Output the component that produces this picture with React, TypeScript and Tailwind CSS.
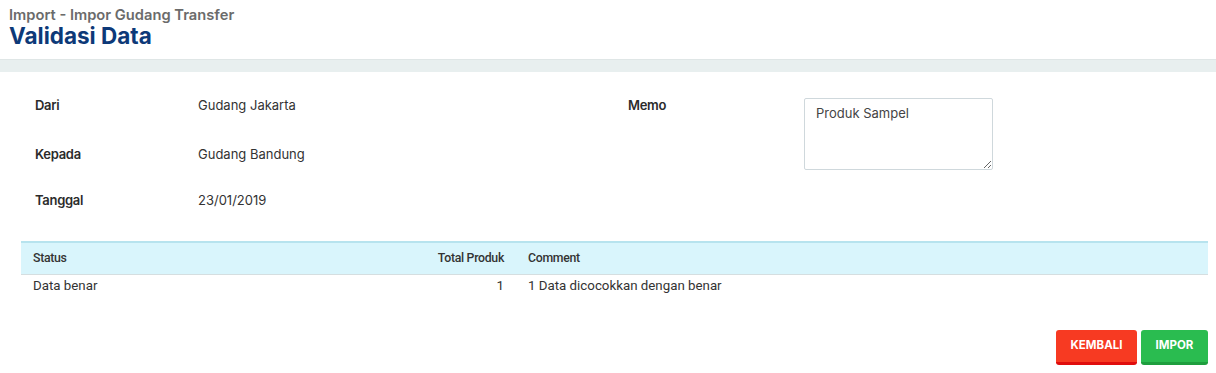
import React from 'react'

const FIELDS = [
  { label: 'Dari', value: 'Gudang Jakarta', gap: 'mt-0' },
  { label: 'Kepada', value: 'Gudang Bandung', gap: 'mt-[33px]' },
  { label: 'Tanggal', value: '23/01/2019', gap: 'mt-[30px]' },
]

export default function App() {
  return (
    <div className="w-[1216px] h-[373px] bg-white font-['Inter',sans-serif] overflow-hidden">
      {/* Page header */}
      <div className="px-[9px] pt-[6px] h-[59px]">
        <p className="text-[14.7px] leading-[18px] font-semibold text-[#6b6b6b]">Import - Impor Gudang Transfer</p>
        <h1 className="text-[22.5px] leading-[24px] font-bold text-[#0d3978]">Validasi Data</h1>
      </div>
      <div className="h-[13px] bg-[#e8efef] border-t border-[#dfe6e6]" />

      {/* Form info */}
      <div className="flex px-[35px] pt-[26px] h-[169px]">
        <div className="w-[593px] flex flex-col">
          {FIELDS.map((f) => (
            <div key={f.label} className={`flex items-center h-[16px] text-[13px] ${f.gap}`}>
              <span className="w-[163px] font-semibold text-[#2b2b2b] tracking-[-0.3px]">{f.label}</span>
              <span className="text-[#333]">{f.value}</span>
            </div>
          ))}
        </div>
        <div className="flex items-start">
          <span className="w-[176px] h-[16px] flex items-center text-[13px] font-semibold text-[#2b2b2b] tracking-[-0.3px]">Memo</span>
          <textarea
            defaultValue="Produk Sampel"
            className="w-[189px] h-[72px] border border-[#cfd8dc] rounded-[2px] px-[11px] py-[5px] text-[13px] text-[#444] outline-none"
          />
        </div>
      </div>

      {/* Result table */}
      <div className="pl-[21px] pr-[8px]">
        <table className="w-full table-fixed font-['Roboto',sans-serif] text-[13.3px] text-[#333] border-collapse">
          <colgroup>
            <col className="w-[404px]" />
            <col className="w-[79px]" />
            <col />
          </colgroup>
          <thead>
            <tr className="bg-[#d9f5fc] border-t-2 border-t-[#b7e3ee] border-b border-b-[#d5dee0] h-[32px] text-[12.3px] tracking-[-0.3px]">
              <th className="text-left font-medium pl-[12px] whitespace-nowrap">Status</th>
              <th className="text-right font-medium whitespace-nowrap">Total Produk</th>
              <th className="text-left font-medium pl-[24px] whitespace-nowrap">Comment</th>
            </tr>
          </thead>
          <tbody>
            <tr className="h-[24px]">
              <td className="pl-[12px]">Data benar</td>
              <td className="text-right">1</td>
              <td className="pl-[24px]">1 Data dicocokkan dengan benar</td>
            </tr>
          </tbody>
        </table>
      </div>

      {/* Actions */}
      <div className="flex justify-end gap-[4px] px-[8px] mt-[32px]">
        <button className="w-[81px] h-[35px] rounded-[3px] bg-[#f73a22] border-b-[3px] border-[#e00d0d] text-white text-[11.5px] font-bold">
          KEMBALI
        </button>
        <button className="w-[67px] h-[35px] rounded-[3px] bg-[#2abc50] border-b-[3px] border-[#1e9e3e] text-white text-[11.5px] font-bold">
          IMPOR
        </button>
      </div>
    </div>
  )
}
